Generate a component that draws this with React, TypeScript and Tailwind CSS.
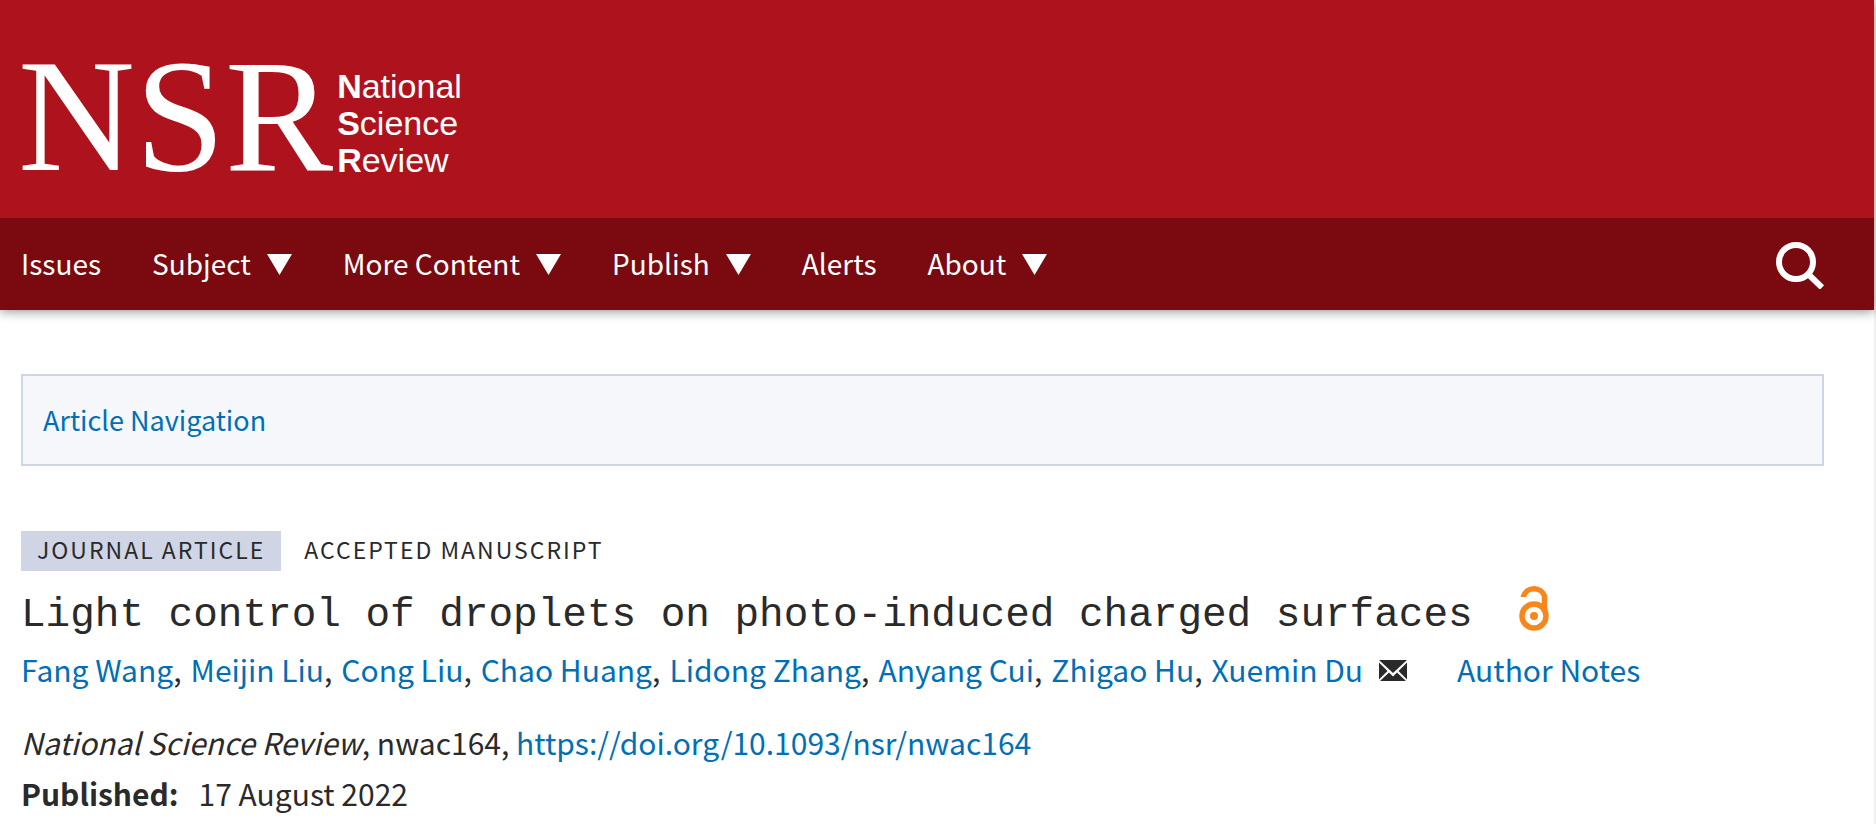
const menu = [
  { label: "Issues", dropdown: false },
  { label: "Subject", dropdown: true },
  { label: "More Content", dropdown: true },
  { label: "Publish", dropdown: true },
  { label: "Alerts", dropdown: false },
  { label: "About", dropdown: true },
];

const authors = [
  "Fang Wang",
  "Meijin Liu",
  "Cong Liu",
  "Chao Huang",
  "Lidong Zhang",
  "Anyang Cui",
  "Zhigao Hu",
  "Xuemin Du",
];

const Logo = () => {
  return (
    <a href="#" className="flex items-end gap-1 text-white">
      <span className="font-['Liberation_Serif',serif] text-[162px] leading-[130px]">
        NSR
      </span>
      <span className="pb-[2px] font-['Liberation_Sans',sans-serif] text-[34px] leading-[37px]">
        <span className="block">
          <b>N</b>ational
        </span>
        <span className="block">
          <b>S</b>cience
        </span>
        <span className="block">
          <b>R</b>eview
        </span>
      </span>
    </a>
  );
};

const SearchIcon = () => {
  return (
    <svg
      className="h-[50px] w-[50px]"
      viewBox="0 0 50 50"
      fill="none"
      stroke="white"
      strokeWidth="6"
    >
      <circle cx="21" cy="23" r="17" />
      <path d="M32.500 34.500 47 48.500" />
    </svg>
  );
};

const OpenAccessIcon = () => {
  return (
    <svg
      className="h-12 w-[31px]"
      viewBox="0 0 31 48"
      fill="none"
      stroke="#f8861b"
      strokeWidth="5.5"
    >
      <circle cx="15" cy="33" r="12" />
      <path d="M4.500 14V13A11 10.500 0 0 1 25.500 13V29" />
      <circle cx="15" cy="33" r="4" fill="#f8861b" stroke="none" />
    </svg>
  );
};

const MailIcon = () => {
  return (
    <svg className="h-[21px] w-7" viewBox="0 0 28 21" fill="#2a2a2a">
      <path d="M0 0H28L14 13Z" />
      <path d="M0 2.500 8.500 11 0 19.500Z" />
      <path d="M28 2.500 19.500 11 28 19.500Z" />
      <path d="M1 21 10 12.500 14 16.500 18 12.500 27 21Z" />
    </svg>
  );
};

const App = () => {
  return (
    <div className="min-h-screen border-r-2 border-[#f0f0f0] bg-white font-['Noto_Sans_CJK_SC','Source_Sans_Pro',sans-serif] text-[#2a2a2a]">
      <header className="shadow-[0_2px_10px_rgba(0,0,0,0.4)]">
        <div className="flex h-[218px] items-start bg-[#ae131d] px-[18px] pt-[51px]">
          <Logo />
        </div>
        <nav className="flex h-[92px] items-center justify-between bg-[#7b0a10] pr-[49px] pl-[21px] text-white">
          <ul className="flex gap-[51px] pb-[2px] text-[28px] leading-[40px]">
            {menu.map((item) => (
              <li key={item.label}>
                <a href="#" className="flex items-center gap-4">
                  {item.label}
                  {item.dropdown && (
                    <svg
                      className="mt-[2px] h-[21px] w-[25px]"
                      viewBox="0 0 25 21"
                      fill="white"
                    >
                      <path d="M0 0H25L12.500 21Z" />
                    </svg>
                  )}
                </a>
              </li>
            ))}
          </ul>
          <button type="button" aria-label="Search" className="cursor-pointer">
            <SearchIcon />
          </button>
        </nav>
      </header>

      <main className="pr-[50px] pl-[21px] pt-16">
        <div className="flex h-[92px] items-center border-2 border-[#d0d5e5] bg-[#f5f7fb] px-5">
          <a href="#" className="text-[27px] leading-[40px] text-[#006fb7]">
            Article Navigation
          </a>
        </div>

        <div className="mt-[65px] flex gap-[23px] text-[23px] leading-[36px] tracking-[2px] uppercase">
          <span className="bg-[#d0d5e5] px-4 pb-1">Journal Article</span>
          <span>Accepted manuscript</span>
        </div>

        <h1 className="mt-4 flex h-[56px] items-center gap-[46px] font-['Liberation_Mono',monospace] text-[41px] leading-[56px]">
          Light control of droplets on photo-induced charged surfaces
          <span className="pb-4">
            <OpenAccessIcon />
          </span>
        </h1>

        <div className="mt-[2px] flex items-center text-[30px] leading-[48px]">
          <ul className="flex gap-[9px]">
            {authors.map((name, i) => (
              <li key={name}>
                <a href="#" className="text-[#006fb7]">
                  {name}
                </a>
                {i < authors.length - 1 && ","}
              </li>
            ))}
          </ul>
          <a href="#" aria-label="Email Xuemin Du" className="mt-[2px] ml-4">
            <MailIcon />
          </a>
          <a href="#" className="ml-[50px] text-[#006fb7]">
            Author Notes
          </a>
        </div>

        <div className="mt-6 text-[30px] leading-[51px]">
          <p>
            <em>National Science Review</em>, nwac164,{" "}
            <a href="#" className="text-[#006fb7]">
              https://doi.org/10.1093/nsr/nwac164
            </a>
          </p>
          <p className="flex gap-5">
            <b>Published:</b>
            <span>17 August 2022</span>
          </p>
        </div>
      </main>
    </div>
  );
};

export default App;
